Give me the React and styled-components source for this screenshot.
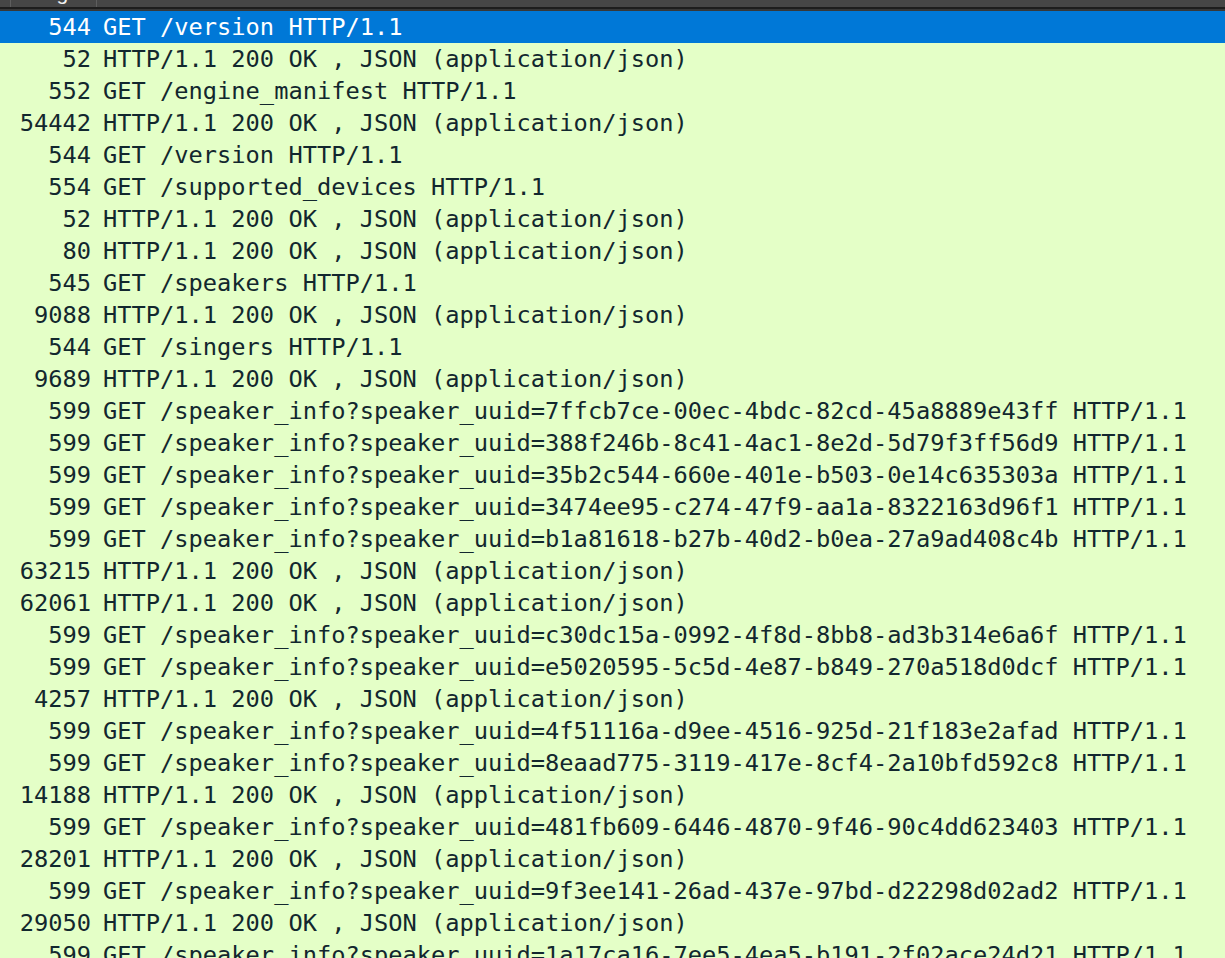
import React from 'react';
import styled, { createGlobalStyle } from 'styled-components';

const GlobalStyle = createGlobalStyle`
  html, body {
    margin: 0;
    padding: 0;
    background: #e4ffc7;
    overflow: hidden;
  }
`;

const Page = styled.div`
  width: 1225px;
  height: 958px;
  overflow: hidden;
  background: #e4ffc7;
`;

const Header = styled.div`
  display: flex;
  height: 7px;
  background: #464646;
  border-bottom: 2px solid #1d1d1d;
  box-shadow: 0 2px 0 #383838;
  margin-bottom: 2px;
  overflow: hidden;
`;

const HeaderCell = styled.div`
  width: ${p => (p.$width ? `${p.$width}px` : 'auto')};
  flex: ${p => (p.$width ? '0 0 auto' : '1')};
  border-right: ${p => (p.$last ? 'none' : '1px solid #5e5e5e')};
  box-sizing: border-box;
  text-align: center;
  overflow: hidden;
`;

const HeaderLabel = styled.div`
  font-family: "Liberation Sans", Arial, sans-serif;
  font-size: 21px;
  line-height: 21px;
  color: #f2f2f2;
  margin-top: -18px;
`;

const Row = styled.div`
  display: flex;
  height: 32px;
  line-height: 32px;
  font-family: "DejaVu Sans Mono", "Liberation Mono", monospace;
  font-size: 23.7px;
  white-space: pre;
  background: ${p => (p.$selected ? '#0078d7' : '#e4ffc7')};
  color: ${p => (p.$selected ? '#ffffff' : '#12272e')};
`;

const LengthCell = styled.div`
  width: 96px;
  flex: 0 0 96px;
  box-sizing: border-box;
  padding-right: 5px;
  text-align: right;
`;

const InfoCell = styled.div`
  flex: 1;
  padding-left: 7px;
  overflow: hidden;
`;

const OK = 'HTTP/1.1 200 OK , JSON (application/json)';
const info = uuid => `GET /speaker_info?speaker_uuid=${uuid} HTTP/1.1`;

const packets = [
  ['544', 'GET /version HTTP/1.1'],
  ['52', OK],
  ['552', 'GET /engine_manifest HTTP/1.1'],
  ['54442', OK],
  ['544', 'GET /version HTTP/1.1'],
  ['554', 'GET /supported_devices HTTP/1.1'],
  ['52', OK],
  ['80', OK],
  ['545', 'GET /speakers HTTP/1.1'],
  ['9088', OK],
  ['544', 'GET /singers HTTP/1.1'],
  ['9689', OK],
  ['599', info('7ffcb7ce-00ec-4bdc-82cd-45a8889e43ff')],
  ['599', info('388f246b-8c41-4ac1-8e2d-5d79f3ff56d9')],
  ['599', info('35b2c544-660e-401e-b503-0e14c635303a')],
  ['599', info('3474ee95-c274-47f9-aa1a-8322163d96f1')],
  ['599', info('b1a81618-b27b-40d2-b0ea-27a9ad408c4b')],
  ['63215', OK],
  ['62061', OK],
  ['599', info('c30dc15a-0992-4f8d-8bb8-ad3b314e6a6f')],
  ['599', info('e5020595-5c5d-4e87-b849-270a518d0dcf')],
  ['4257', OK],
  ['599', info('4f51116a-d9ee-4516-925d-21f183e2afad')],
  ['599', info('8eaad775-3119-417e-8cf4-2a10bfd592c8')],
  ['14188', OK],
  ['599', info('481fb609-6446-4870-9f46-90c4dd623403')],
  ['28201', OK],
  ['599', info('9f3ee141-26ad-437e-97bd-d22298d02ad2')],
  ['29050', OK],
  ['599', info('1a17ca16-7ee5-4ea5-b191-2f02ace24d21')],
];

const App = () => {
  return (
    <Page>
      <GlobalStyle />
      <Header>
        <HeaderCell $width={11} />
        <HeaderCell $width={86}>
          <HeaderLabel>Length</HeaderLabel>
        </HeaderCell>
        <HeaderCell $last />
      </Header>
      {packets.map(([len, text], i) => (
        <Row key={i} $selected={i === 0}>
          <LengthCell>{len}</LengthCell>
          <InfoCell>{text}</InfoCell>
        </Row>
      ))}
    </Page>
  );
};

export default App;
